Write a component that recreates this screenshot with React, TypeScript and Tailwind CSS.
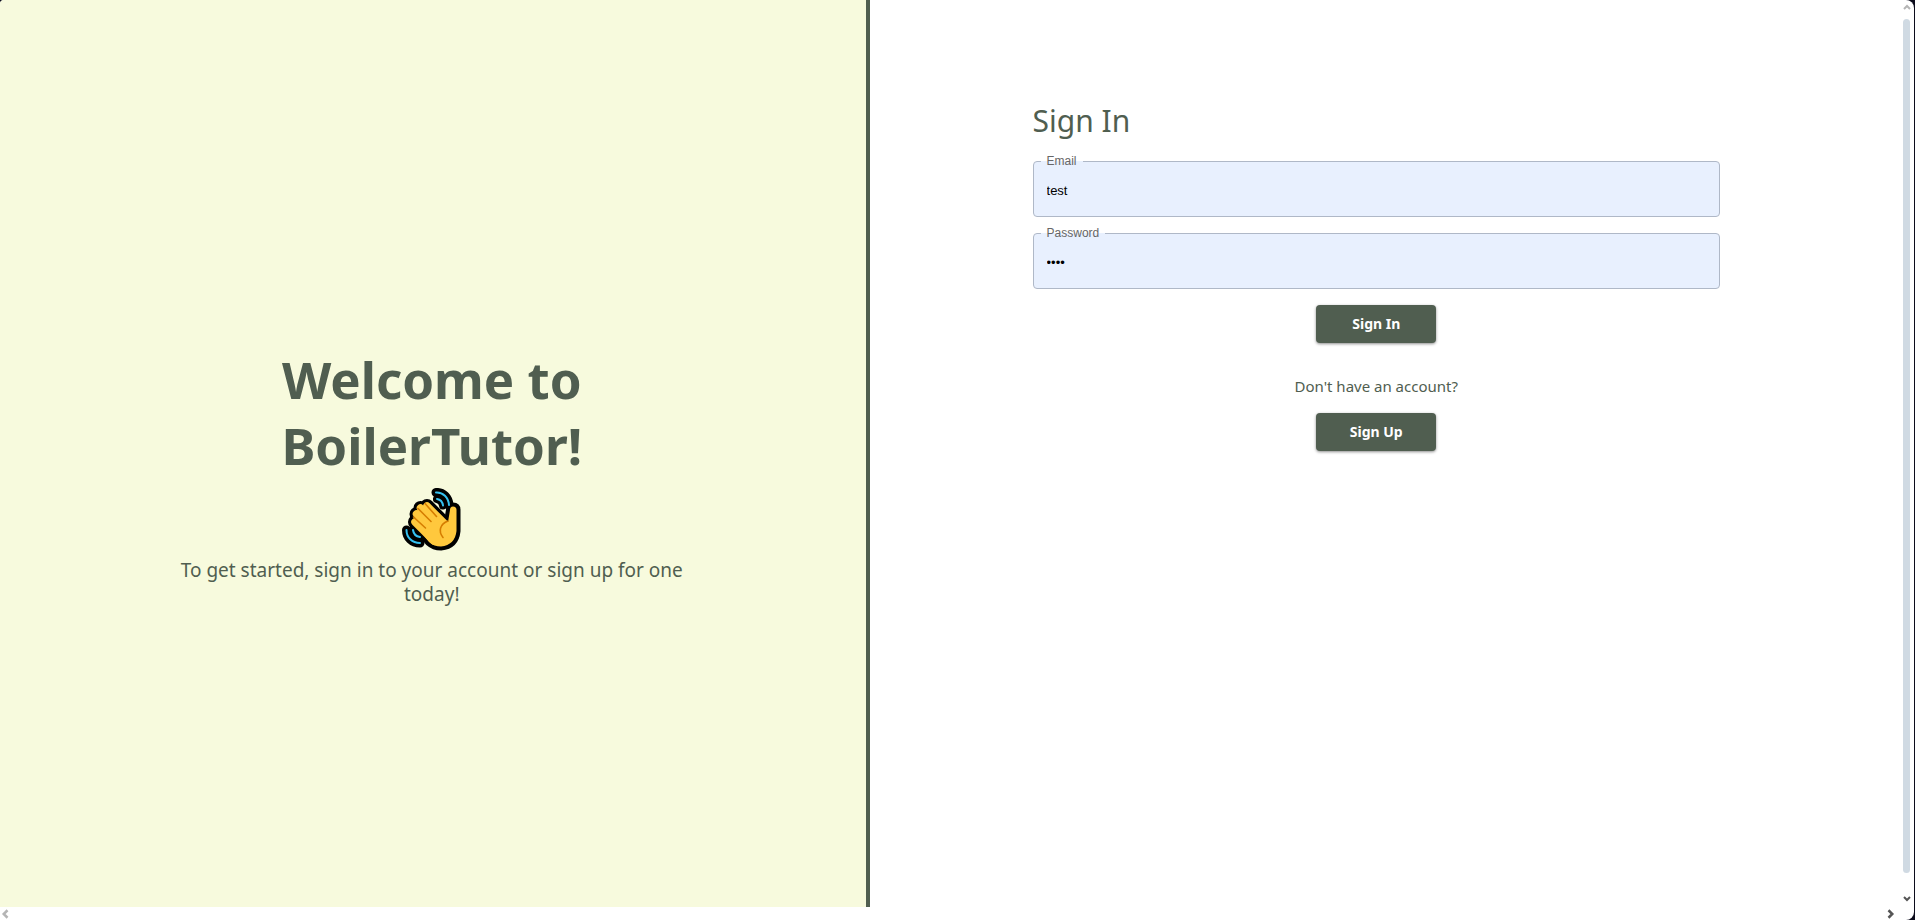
import { useState } from "react";

const fingers = "M25 18 L44 37 M18.5 20 L38 41 M14.5 26 L34 46 M13 34 L32 53";
const palm = "M24 26 L46 34 L48 22 Q48 18.5 51 18.5 Q54.5 18.5 54.5 22 L54.5 43 Q53 57 39 58.5 Q32 58.5 27 54 L16 40 Z";
const outerArcs = "M34 4.5 C41 4 46.5 9.5 47 17 M4.5 42 C4.5 49.5 10 55 18 55";
const innerArcs = "M35 11 C38 11.5 40.5 13.5 41 17.5 M11 42 C11.5 45.5 14 48.5 18 49";

function WavingHand() {
  return (
    <svg viewBox="0 0 60 64" className="h-16 w-15" role="img" aria-label="Waving hand">
      <g fill="none" stroke="#000" strokeLinecap="round" strokeLinejoin="round">
        <path d={outerArcs} strokeWidth="9" />
        <path d={innerArcs} strokeWidth="8" />
        <path d={fingers} strokeWidth="14" />
        <path d={palm} strokeWidth="8" fill="#000" />
      </g>
      <path d={fingers} fill="none" stroke="#ffc83d" strokeWidth="7.5" strokeLinecap="round" />
      <path d={palm} fill="#ffc83d" />
      <g fill="none" stroke="#d67d00" strokeWidth="1.6" strokeLinecap="round">
        <path d="M23 15.5 L34.5 28.5" />
        <path d="M16 20.5 L29 33.5" />
        <path d="M11.5 29 L23.5 40" />
        <path d="M46 33 C38 36 36 43 41 49.5" />
      </g>
      <g fill="none" stroke="#35c1f1" strokeWidth="2" strokeLinecap="round">
        <path d={outerArcs} />
        <path d={innerArcs} />
      </g>
    </svg>
  );
}

type ChevronProps = { d: string; className: string };

function Chevron({ d, className }: ChevronProps) {
  return (
    <svg viewBox="0 0 8 8" className={className} fill="none" stroke="currentColor" strokeWidth="2" aria-hidden="true">
      <path d={d} />
    </svg>
  );
}

type FieldProps = { id: string; label: string; type: string; initial: string };

function Field({ id, label, type, initial }: FieldProps) {
  const [value, setValue] = useState(initial);
  return (
    <div className="relative">
      <label
        htmlFor={id}
        className="absolute -top-2 left-2 bg-linear-to-b from-white from-50% to-[#e8f0fe] to-50% px-1.5 text-xs leading-4 text-[#666]"
      >
        {label}
      </label>
      <input
        id={id}
        type={type}
        value={value}
        onChange={(e) => setValue(e.target.value)}
        className="h-14 w-full rounded border border-[#afb8c7] bg-[#e8f0fe] px-[13px] pt-0.5 text-[13px] text-black outline-none"
      />
    </div>
  );
}

const buttonClass =
  "h-[38px] w-30 rounded bg-[#505e50] font-['Noto_Sans','Open_Sans',sans-serif] text-sm font-bold text-white shadow-[0_1px_3px_rgba(0,0,0,0.45)]";

export default function App() {
  return (
    <div className="h-screen bg-[#0c0c1c] pr-px font-['Liberation_Sans',Arial,sans-serif]">
      <div className="flex h-full flex-col overflow-hidden rounded-r-lg rounded-tl-sm bg-white">
        <div className="flex min-h-0 flex-1">
          <main className="grid flex-1 grid-cols-[87fr_103fr] text-[#505e50]">
            <section className="flex flex-col items-center justify-center border-r-4 border-[#505e50] bg-[#f7fadd] pt-11 pr-[162px] pl-40 text-center font-['Noto_Sans','Open_Sans',sans-serif]">
              <h1 className="text-[51px] leading-[66px] font-bold">
                Welcome to
                <br />
                BoilerTutor!
              </h1>
              <div className="mt-2.5 mb-1.5">
                <WavingHand />
              </div>
              <p className="text-[19px] leading-6">To get started, sign in to your account or sign up for one today!</p>
            </section>
            <section className="pt-24 pr-[179px] pl-[163px]">
              <form className="flex flex-col items-center gap-4" onSubmit={(e) => e.preventDefault()}>
                <h2 className="w-full font-['Noto_Sans','Open_Sans',sans-serif] text-[30px] leading-[49px]">Sign In</h2>
                <div className="flex w-full flex-col gap-4">
                  <Field id="email" label="Email" type="text" initial="test" />
                  <Field id="password" label="Password" type="password" initial="test" />
                </div>
                <button type="submit" className={buttonClass}>
                  Sign In
                </button>
                <p className="mt-4 font-['Noto_Sans','Open_Sans',sans-serif] text-[15px] leading-[22px]">
                  Don't have an account?
                </p>
                <button type="button" className={buttonClass}>
                  Sign Up
                </button>
              </form>
            </section>
          </main>
          <div className="flex w-[15px] flex-col items-center gap-2 pt-[3px] pb-1" aria-hidden="true">
            <Chevron d="M1 6 L4 3 L7 6" className="size-2 text-[#b5b5b5]" />
            <div className="mb-3.5 w-[7px] flex-1 rounded-sm bg-[#d0dae3]" />
            <Chevron d="M1 2 L4 5 L7 2" className="size-2 text-[#555]" />
          </div>
        </div>
        <div className="flex h-[13px] items-center justify-between pr-[18px]" aria-hidden="true">
          <Chevron d="M6 1 L3 4 L6 7" className="size-2.5 text-[#b5b5b5]" />
          <Chevron d="M2 1 L5 4 L2 7" className="size-2.5 text-[#555]" />
        </div>
      </div>
    </div>
  );
}
